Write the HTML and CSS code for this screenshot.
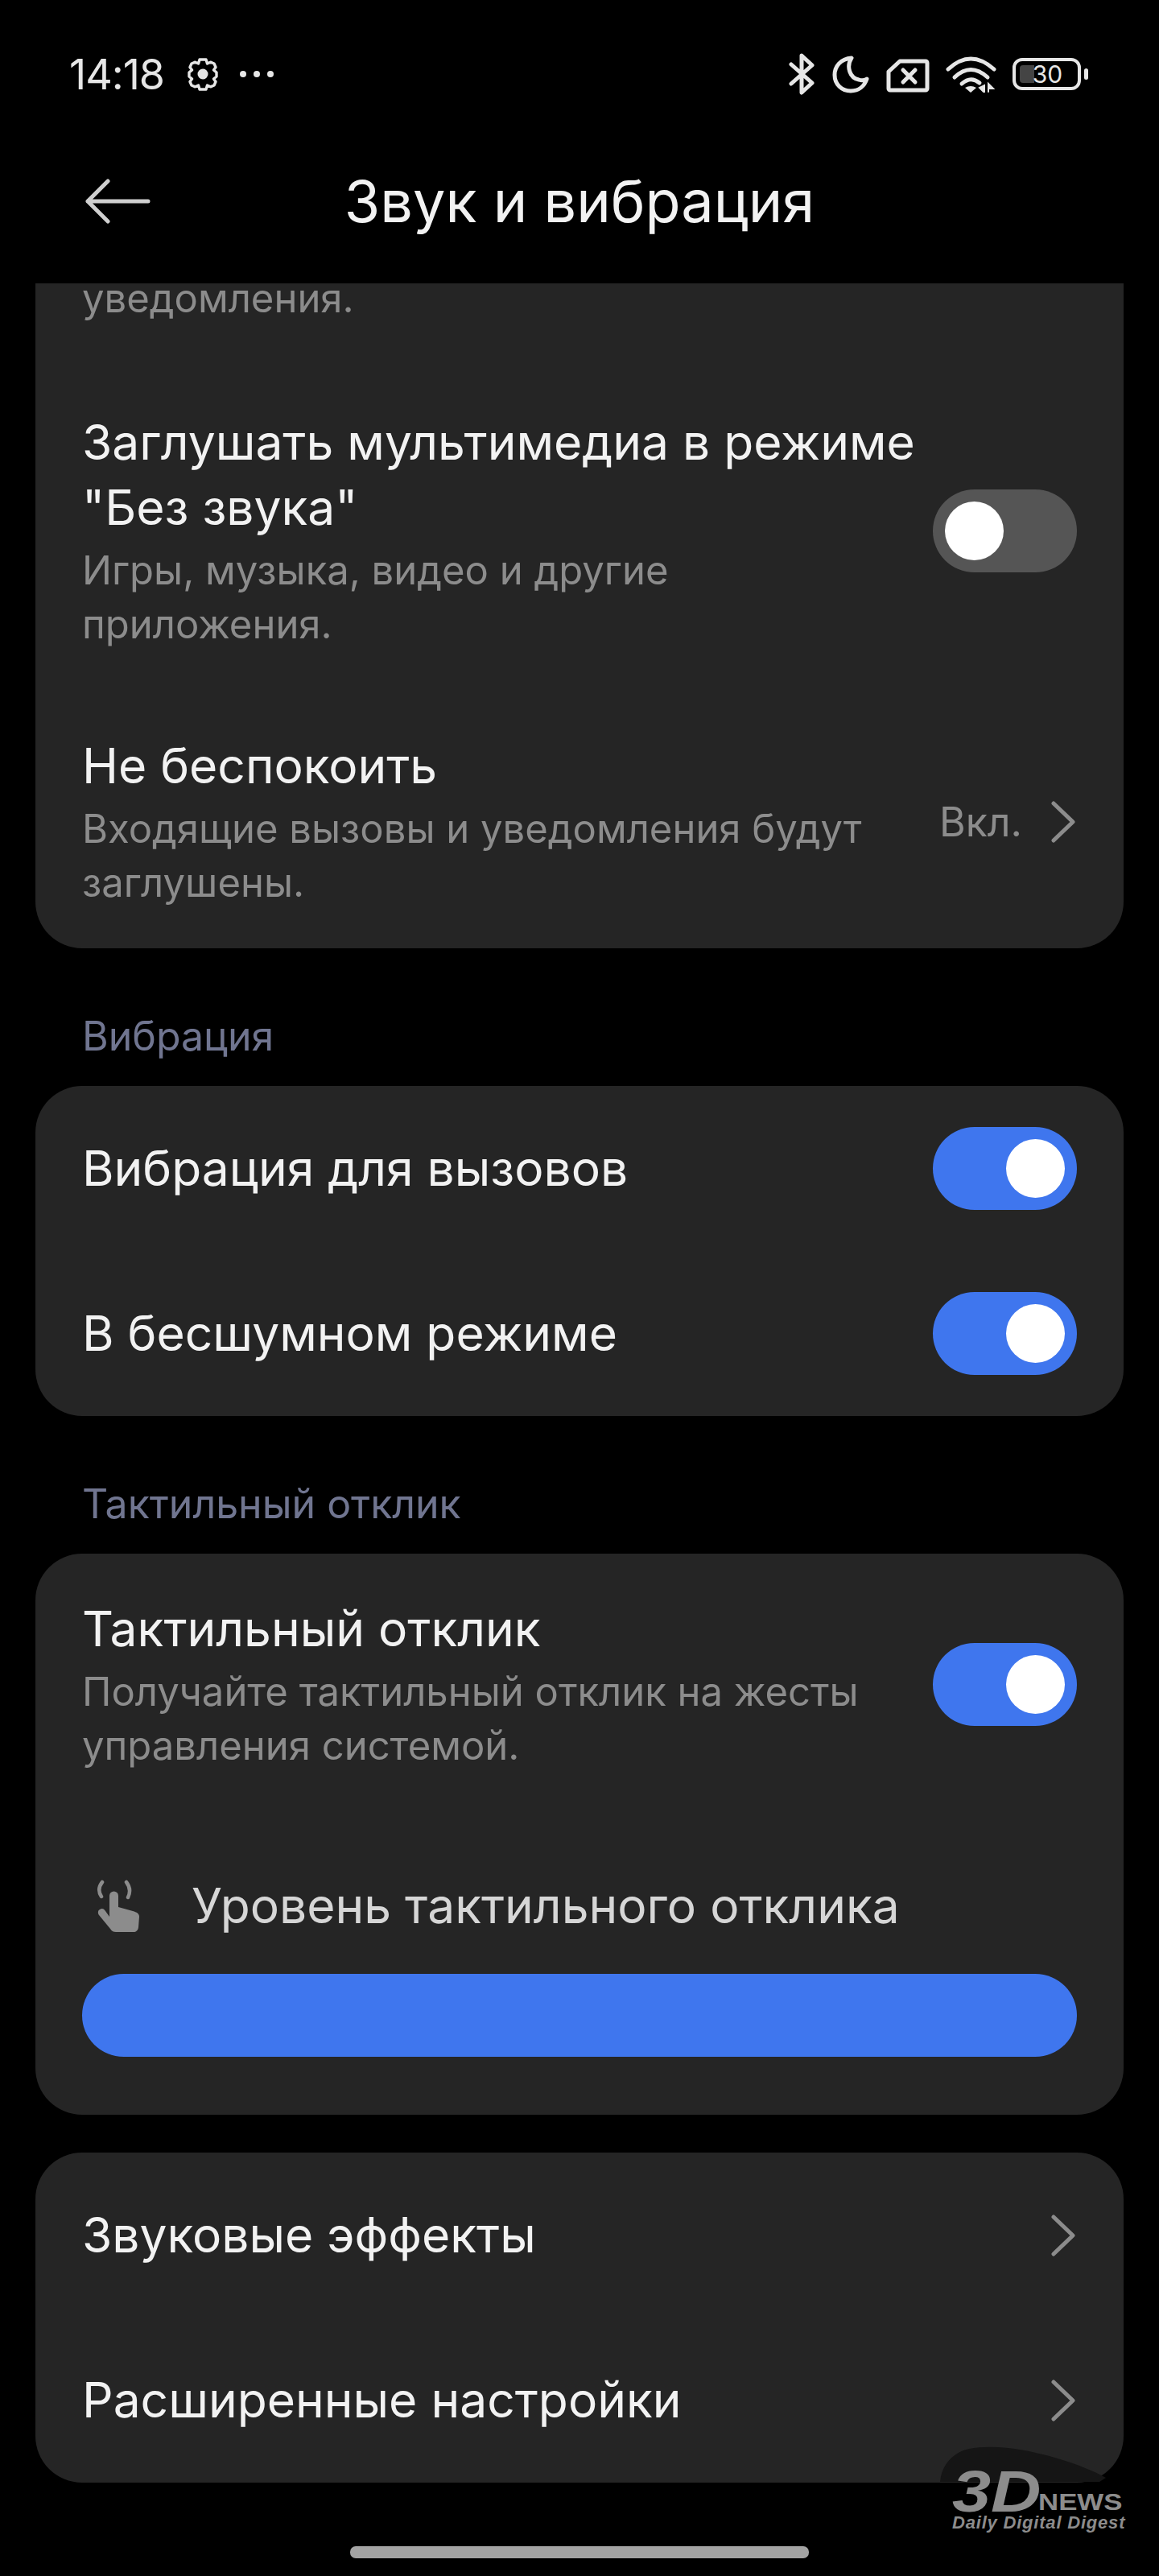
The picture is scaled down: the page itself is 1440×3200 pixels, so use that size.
FILE: index.html
```html
<!DOCTYPE html>
<html lang="ru">
<head>
  <meta charset="UTF-8">
  <title>Звук и вибрация</title>
  <link rel="stylesheet" href="styles.css">
</head>
<body>
  <div class="page">
    <div class="status">
      <div class="status-left">
        <span class="time">14:18</span>
        <svg class="gear" width="40" height="42" viewBox="0 0 40 42" fill="none" stroke="#e6e6e6" stroke-width="3.4" stroke-linejoin="round">
          <path d="M16 3h8l1.500 5 4-1.800 4.500 1.800 2 4.500-2.500 3.500 3.500 3 0 5-3.500 3 2.500 3.500-2 4.500-4.500 1.800-4-1.800-1.500 5h-8l-1.500-5-4 1.800-4.500-1.800-2-4.500 2.500-3.500-3.500-3 0-5 3.500-3-2.500-3.500 2-4.500 4.500-1.800 4 1.800z"/>
          <circle cx="20" cy="21" r="6.500" fill="#e6e6e6" stroke="none"/>
        </svg>
        <div class="dots"><i></i><i></i><i></i></div>
      </div>
      <div class="status-right">
        <svg width="32" height="52" viewBox="0 0 32 52" fill="none" stroke="#e6e6e6" stroke-width="5" stroke-linecap="round" stroke-linejoin="round">
          <path d="M3 14l26 23-13 12V3l13 12L3 38"/>
        </svg>
        <svg class="moon" width="46" height="47" viewBox="0 0 46 47" fill="none" stroke="#e6e6e6" stroke-width="5" stroke-linejoin="round">
          <path d="M24 3C10 4 3 14 3 24c0 12 9 20 20 20 10 0 17-6 20-15-3 2-7 2-10 1C22 28 17 14 24 3z"/>
        </svg>
        <svg class="sim" width="54" height="42" viewBox="0 0 54 42" fill="none" stroke="#e6e6e6" stroke-width="5" stroke-linejoin="round">
          <path d="M17 3h32a2 2 0 0 1 2 2v32a2 2 0 0 1-2 2H5a2 2 0 0 1-2-2V16z"/>
          <path d="M21 14l15 15M36 14L21 29" stroke-linecap="round"/>
        </svg>
        <svg class="wifi" width="63" height="45" viewBox="0 0 63 45" fill="none" stroke="#e6e6e6" stroke-width="5" stroke-linecap="round">
          <path d="M3 16Q31-10 60 16"/>
          <path d="M11 26Q31 7 52 26"/>
          <path d="M20 34Q31 24 42 33"/>
          <path d="M31 45l-7-6q7-4 14 0z" fill="#e6e6e6" stroke="none"/>
          <path d="M48 36v9l-6-6zM53 34v10M53 34l6 6h-6z" fill="#e6e6e6" stroke-width="2"/>
        </svg>
        <div class="battery">
          <div class="battery-body">
            <div class="battery-fill"></div>
            <span class="battery-text">30</span>
          </div>
          <div class="battery-nub"></div>
        </div>
      </div>
    </div>

    <div class="header">
      <svg class="back" width="82" height="56" viewBox="0 0 82 56" fill="none" stroke="#cfcfcf" stroke-width="5" stroke-linecap="round" stroke-linejoin="round">
        <path d="M79 28H4M29 3L4 28l25 25"/>
      </svg>
      <div class="title">Звук и вибрация</div>
    </div>

    <div class="scroll">
      <div class="card card-clipped">
        <div class="desc clipped-desc">уведомления.</div>
        <div class="row">
          <div class="row-text">
            <div class="row-title">Заглушать мультимедиа в режиме "Без звука"</div>
            <div class="desc">Игры, музыка, видео и другие приложения.</div>
          </div>
          <div class="toggle"><div class="knob"></div></div>
        </div>
        <div class="row">
          <div class="row-text">
            <div class="row-title">Не беспокоить</div>
            <div class="desc">Входящие вызовы и уведомления будут заглушены.</div>
          </div>
          <div class="row-value">Вкл.</div>
          <svg class="chevron" width="30" height="52" viewBox="0 0 30 52" fill="none" stroke="#8c8c8c" stroke-width="5" stroke-linecap="round" stroke-linejoin="round">
            <path d="M3 3l24 23L3 49"/>
          </svg>
        </div>
      </div>

      <div class="section-label">Вибрация</div>
      <div class="card">
        <div class="row row-single">
          <div class="row-text"><div class="row-title">Вибрация для вызовов</div></div>
          <div class="toggle on"><div class="knob"></div></div>
        </div>
        <div class="row row-single">
          <div class="row-text"><div class="row-title">В бесшумном режиме</div></div>
          <div class="toggle on"><div class="knob"></div></div>
        </div>
      </div>

      <div class="section-label">Тактильный отклик</div>
      <div class="card card-haptic">
        <div class="row">
          <div class="row-text">
            <div class="row-title">Тактильный отклик</div>
            <div class="desc">Получайте тактильный отклик на жесты управления системой.</div>
          </div>
          <div class="toggle on"><div class="knob"></div></div>
        </div>
        <div class="level-head">
          <svg width="56" height="66" viewBox="0 0 56 66" fill="#8c8c8c">
            <path d="M16 20a5.500 5.500 0 0 1 11 0v14l18 5c5 1.500 8 3 8 7l-1 13c-.5 4-3 6-6 6H24c-3 0-5-1-7-4L3 44c-2-3-1-6 1-7 3-2 5-1 7 2l5 7z"/>
            <path d="M7 3Q0 12 6 21M37 3q7 9 2 19" fill="none" stroke="#8c8c8c" stroke-width="4.500" stroke-linecap="round"/>
          </svg>
          <span class="level-title">Уровень тактильного отклика</span>
        </div>
        <div class="slider"></div>
      </div>

      <div class="card card-last">
        <div class="row row-single row-link">
          <div class="row-text"><div class="row-title">Звуковые эффекты</div></div>
          <svg class="chevron" width="30" height="52" viewBox="0 0 30 52" fill="none" stroke="#8c8c8c" stroke-width="5" stroke-linecap="round" stroke-linejoin="round">
            <path d="M3 3l24 23L3 49"/>
          </svg>
        </div>
        <div class="row row-single row-link">
          <div class="row-text"><div class="row-title">Расширенные настройки</div></div>
          <svg class="chevron" width="30" height="52" viewBox="0 0 30 52" fill="none" stroke="#8c8c8c" stroke-width="5" stroke-linecap="round" stroke-linejoin="round">
            <path d="M3 3l24 23L3 49"/>
          </svg>
        </div>
      </div>
    </div>

    <div class="home-bar"></div>

    <!-- watermark sits on top of the last card -->
    <svg class="brush" width="210" height="45" viewBox="0 0 210 45" fill="#151515">
      <path d="M0 45C2 22 18 8 36 4c30-6 70 0 110 12 24 7 46 16 60 24l-8 5z"/>
    </svg>
    <div class="logo">
      <div class="logo-top"><span class="logo-3d">3D</span><span class="logo-news">NEWS</span></div>
      <div class="logo-sub">Daily Digital Digest</div>
    </div>
  </div>
</body>
</html>
```
FILE: styles.css
```css
body, html {
  margin: 0;
  padding: 0;
  background-color: #000;
  font-family: Inter, "Noto Sans", sans-serif;
}

.page {
  position: relative;
  width: 1440px;
  height: 3200px;
  overflow: hidden;
  display: flex;
  flex-direction: column;
}

.status {
  height: 184px;
  flex-shrink: 0;
  display: flex;
  justify-content: space-between;
  align-items: center;
  padding: 0 88px 0 86px;
}

.status-left {
  display: flex;
  align-items: center;
}

.time {
  font-size: 52px;
  color: #e6e6e6;
  letter-spacing: -1px;
  width: 146px;
}

.dots {
  display: flex;
  gap: 9px;
  margin-left: 26px;
}

.dots i {
  width: 8px;
  height: 8px;
  border-radius: 50%;
  background-color: #e6e6e6;
}

.status-right {
  display: flex;
  align-items: center;
}

.moon { margin-left: 22px; }
.sim { margin-left: 21px; margin-top: 4px; }
.wifi { margin-left: 20px; margin-top: 1px; }

.battery {
  display: flex;
  align-items: center;
  margin-left: 20px;
}

.battery-body {
  position: relative;
  box-sizing: border-box;
  width: 85px;
  height: 40px;
  border: 4px solid #e6e6e6;
  border-radius: 12px;
  display: flex;
  align-items: center;
  justify-content: center;
}

.battery-fill {
  position: absolute;
  left: 5px;
  top: 5px;
  bottom: 5px;
  width: 18px;
  background-color: #444;
  border-radius: 4px 0 0 4px;
}

.battery-text {
  position: relative;
  font-size: 30px;
  color: #e6e6e6;
  margin-left: 2px;
}

.battery-nub {
  width: 5px;
  height: 14px;
  margin-left: 4px;
  border-radius: 3px;
  background-color: #e6e6e6;
}

.header {
  height: 168px;
  flex-shrink: 0;
  position: relative;
  display: flex;
  justify-content: center;
}

.back {
  position: absolute;
  left: 105px;
  top: 38px;
}

.title {
  font-size: 72px;
  line-height: 132px;
  color: #f2f2f2;
  font-weight: 400;
}

.scroll {
  display: flex;
  flex-direction: column;
  padding: 0 44px;
}

.card {
  background-color: #252525;
  border-radius: 58px;
  padding: 0 58px;
}

.card-clipped {
  border-radius: 0 0 58px 58px;
}

.clipped-desc {
  margin-top: -15px;
  padding-bottom: 54px;
}

.row {
  display: flex;
  align-items: center;
  padding: 51px 0;
}

.card-clipped .row:last-child {
  padding-bottom: 48px;
}

.row-single {
  height: 205px;
  padding: 0;
}

.row-text {
  flex-grow: 1;
  min-width: 0;
}

.row-title {
  font-size: 60.500px;
  line-height: 81px;
  color: #f2f2f2;
  max-width: 1040px;
}

.desc {
  font-size: 49px;
  line-height: 67px;
  color: #8c8c8c;
  max-width: 990px;
}

.row-title + .desc {
  margin-top: 4px;
}

.toggle {
  flex-shrink: 0;
  display: flex;
  align-items: center;
  box-sizing: border-box;
  width: 179px;
  height: 103px;
  padding: 0 15px;
  border-radius: 52px;
  background-color: #555;
}

.toggle.on {
  justify-content: flex-end;
  background-color: #3f76ee;
}

.knob {
  width: 73px;
  height: 73px;
  border-radius: 50%;
  background-color: #fff;
}

.row-value {
  font-size: 50px;
  color: #8c8c8c;
  margin-left: 40px;
  white-space: nowrap;
}

.chevron {
  flex-shrink: 0;
  margin: 0 2px 0 36px;
}

.section-label {
  height: 171px;
  box-sizing: border-box;
  padding: 80px 58px 0;
  font-size: 50px;
  line-height: 58px;
  color: #707590;
}

.card-haptic .row {
  padding-top: 53px;
}

.level-head {
  display: flex;
  align-items: center;
  margin: 74px 0 44px 18px;
}

.level-title {
  font-size: 60.500px;
  line-height: 81px;
  color: #d6d6d6;
  margin-left: 62px;
}

.slider {
  height: 103px;
  border-radius: 52px;
  background-color: #3f76ee;
}

.card-haptic { padding-bottom: 72px; }
.card-last { margin-top: 47px; }

.home-bar {
  position: absolute;
  left: 435px;
  top: 3163px;
  width: 570px;
  height: 15px;
  border-radius: 7px;
  background-color: #a3a3a3;
}

.brush {
  position: absolute;
  left: 1168px;
  top: 3038px;
}

.logo {
  position: absolute;
  left: 1183px;
  top: 3069px;
  color: #8c8c8c;
  font-family: "Liberation Sans", Arial, sans-serif;
  font-style: italic;
  font-weight: 700;
}

.logo-top {
  display: flex;
  align-items: flex-end;
  height: 52px;
}

.logo-3d {
  font-size: 72px;
  line-height: 52px;
  width: 107px;
  transform: scaleX(1.2);
  transform-origin: left;
}

.logo-news {
  font-size: 29px;
  line-height: 26px;
  font-style: normal;
  transform: scaleX(1.2);
  transform-origin: left;
}

.logo-sub {
  font-size: 22px;
  line-height: 22px;
  margin-top: 2px;
  letter-spacing: 0.8px;
  white-space: nowrap;
}
```
